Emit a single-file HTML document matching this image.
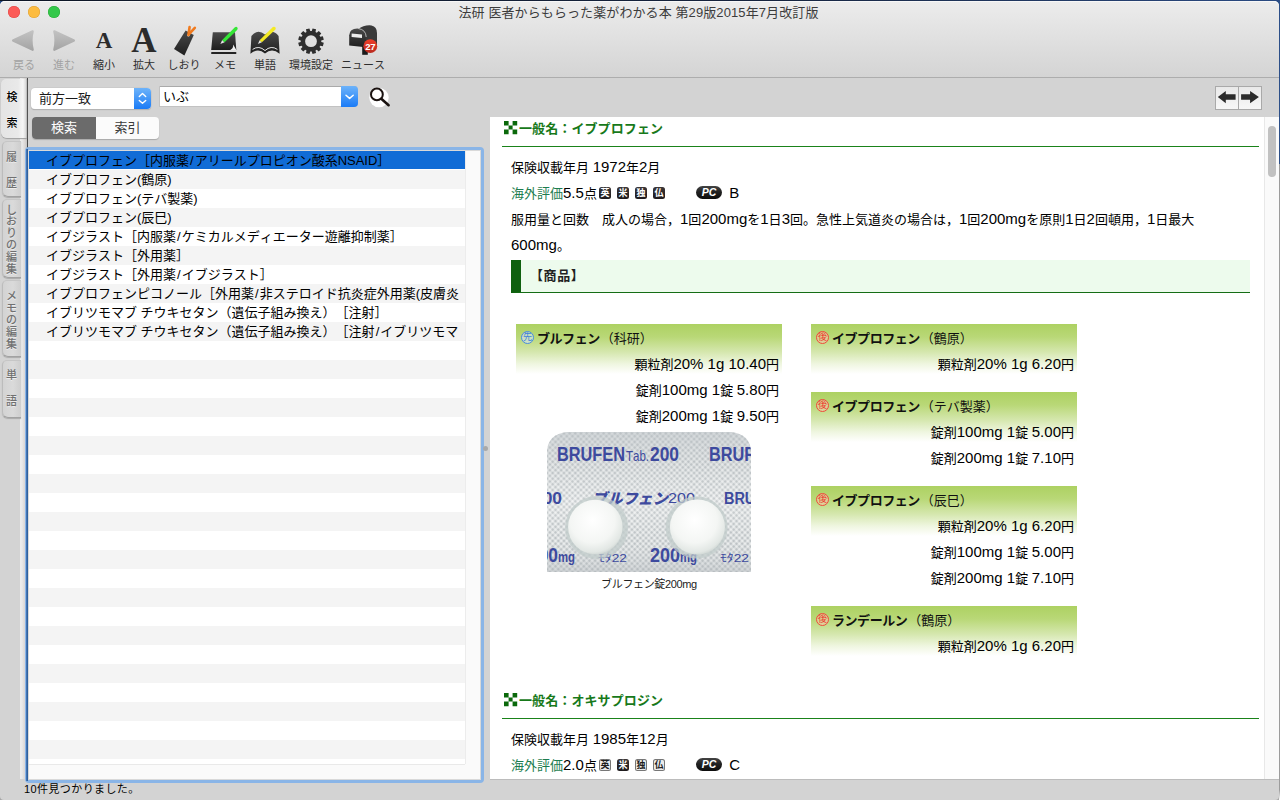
<!DOCTYPE html>
<html lang="ja">
<head>
<meta charset="utf-8">
<title>法研 医者からもらった薬がわかる本 第29版2015年7月改訂版</title>
<style>
*{box-sizing:border-box;margin:0;padding:0}
html,body{text-spacing-trim:space-all;font-kerning:none;width:1280px;height:800px;overflow:hidden;background:#d3d3d3;font-family:"Liberation Sans","Noto Sans CJK JP",sans-serif;color:#000}
.abs{position:absolute}
#win{position:absolute;left:0;top:0;width:1280px;height:800px;background:#2c4f88;overflow:hidden}
#winbg{position:absolute;left:0;top:1px;width:1279px;height:799px;background:#d3d3d3;border-radius:5px 5px 4px 4px}
#topline{position:absolute;left:0;top:0;width:1280px;height:1px;background:linear-gradient(90deg,#0d1626,#16243e 60%,#2a4a82)}
#rightline{position:absolute;left:1279px;top:0;width:1px;height:800px;background:linear-gradient(#2c4f88 0,#2c4f88 164px,#9c9c9c 164px,#9c9c9c 790px,#fff 800px)}
#toolbar{position:absolute;left:0;top:1px;width:1279px;height:77px;background:linear-gradient(#ececec,#d4d4d4);border-bottom:1px solid #adadad;border-radius:5px 5px 0 0;box-shadow:inset 0 1px 0 #f7f7f7}
.tl{position:absolute;top:5px;width:12px;height:12px;border-radius:50%}
#title{position:absolute;left:0;top:3px;width:1277px;text-align:center;font-size:13px;line-height:18px;color:#3c3c3c;letter-spacing:.1px}
.tlabel{position:absolute;top:56px;width:70px;text-align:center;font-size:11px;line-height:16px;color:#2e2e2e}
.tlabel.dis{color:#a2a2a2}
.ticon{position:absolute}
/* sidebar tabs */
#tabs{position:absolute;left:0;top:78px;width:27px;height:701px;background:linear-gradient(90deg,#d3d3d3 0,#d3d3d3 19.5px,#ececec 20.5px,#e9e9e9 22px,#dad6d4 25px,#c4c4c4 27px)}
#tabline{position:absolute;left:27px;top:78px;width:1px;height:70px;background:#4a4a4a}
.vtab{position:absolute;left:2px;width:19px;border:1px solid #bcbcbc;border-top-color:#c6c6c6;border-bottom-color:#a2a2a2;border-right:none;border-radius:5px 0 0 6px;background:linear-gradient(90deg,#d3d3d3,#dadada 55%,#cecece);color:#707070;font-weight:500;text-shadow:0 1px 0 #ededed;font-size:11px;text-align:center;box-shadow:0 1px 1px #aaa}
.vtab span{display:block;position:absolute;left:-1px;width:19px;text-align:center;line-height:12px}
#tabA{position:absolute;left:1px;top:79px;width:26px;height:59px;border-radius:5px 0 0 6px;background:linear-gradient(90deg,#e4e4e4 0,#e9e9e9 17px,#f6f6f6 22px,#d8d8d8 25px,#a8a8a8 26px);box-shadow:0 1px 1px #a0a0a0}
#tabA span{position:absolute;left:0;width:22px;text-align:center;font-size:11px;line-height:12px;color:#000;font-weight:500;text-shadow:0 0 2px #fff,0 0 1px #fff}
/* left pane */
#sel{position:absolute;left:31px;top:88px;width:120px;height:21px;border-radius:4px;background:#fff;box-shadow:0 0 0 .5px #c4c4c4,0 1px 1px rgba(0,0,0,.25);font-size:13px;line-height:21px;padding-left:8px;color:#1a1a1a}
#selb{position:absolute;right:0;top:0;width:17px;height:21px;border-radius:0 4px 4px 0;background:linear-gradient(#6db3fa,#1a7bf6)}
#inp{position:absolute;left:159px;top:86px;width:199px;height:21px;background:#fff;border:1px solid #c2c2c2;border-top-color:#aaa;font-size:13px;line-height:19px;padding-left:3px;border-radius:0 4px 4px 0}
#inpb{position:absolute;right:-1px;top:-1px;width:17px;height:21px;border-radius:0 4px 4px 0;background:linear-gradient(#6db3fa,#1a7bf6)}
#seg{position:absolute;left:32px;top:117px;width:127px;height:22px;border-radius:4px;background:#fbfbfb;box-shadow:0 1px 1px rgba(0,0,0,.2);font-size:13px;overflow:hidden}
#seg div{position:absolute;top:0;height:22px;line-height:22px;text-align:center}
#seg .on{left:0;width:64px;background:#6b6b6b;color:#fff}
#seg .off{left:64px;width:63px;color:#3a3a3a}
#ring{position:absolute;left:25px;top:147px;width:459px;height:636px;border-radius:4px;background:#8ab5e7}
#ringin{position:absolute;left:26px;top:149px;width:2px;height:632px;background:linear-gradient(90deg,#4575b3 0,#4575b3 1px,#2f62a0 1px)}
#list{position:absolute;left:28px;top:150px;width:453px;height:630px;background:#fff;overflow:hidden;border:1px solid #d9d9d9}
#rows{position:absolute;left:0;top:0;width:436px;height:613px;background:repeating-linear-gradient(#fff 0,#fff 19px,#f4f4f4 19px,#f4f4f4 38px)}
#vs{position:absolute;left:436px;top:0;width:15px;height:613px;background:#fafafa;border-left:1px solid #ececec}
#hs{position:absolute;left:0;top:613px;width:451px;height:15px;background:linear-gradient(90deg,#e9e9e9 0,#e9e9e9 436px,#fafafa 436px) top left/100% 1px no-repeat #fafafa}
.row{position:absolute;left:0;width:436px;height:19px;line-height:19px;font-size:13px;padding-left:17px;white-space:nowrap;overflow:hidden;color:#000}
.sl{margin:0 1px}
#selrow{position:absolute;left:0;top:0;width:436px;height:18px;background:#116cd6}
#split{z-index:0;position:absolute;left:483px;top:446px;width:5px;height:5px;border-radius:50%;background:#a9a9a9}
#status{position:absolute;left:24px;top:781px;font-size:11px;line-height:16px;color:#000;letter-spacing:.4px}
/* right pane */
#nav{position:absolute;left:1215px;top:86px;width:47px;height:24px;border:1px solid #a9a9a9;background:linear-gradient(#e9e9e9,#f7f7f7)}
#nav i{position:absolute;left:22px;top:0;width:1px;height:22px;background:#a9a9a9}
#doc{position:absolute;left:490px;top:117px;width:774px;height:662px;background:#fff;overflow:hidden;font-size:13px}
#sb{position:absolute;left:1264px;top:117px;width:15px;height:662px;background:#fafafa;border-left:1px solid #e8e8e8}
#thumb{position:absolute;left:1268px;top:126px;width:8px;height:51px;border-radius:4px;background:#c1c1c1}
.h1{position:absolute;left:12px;width:757px;height:30px;border-bottom:1px solid #1a831a;color:#17791a;font-weight:bold;font-size:13px;line-height:18px;padding-left:17px;padding-top:3px;letter-spacing:.1px}
.h1 svg{position:absolute;left:2px;top:4px}
.ln{position:absolute;left:21px;font-size:13px;line-height:26px;white-space:nowrap;color:#000}
.l{font-size:15px;line-height:1}
.grn{color:#1d7d4f}
.cbadge{display:inline-block;vertical-align:2.5px;width:12px;height:12px;border-radius:2.5px;background:linear-gradient(#3a3638,#1e1a1c);color:#fff;font-size:9px;line-height:12px;text-align:center;font-weight:bold;letter-spacing:0;margin-left:2px;margin-right:4px}
.cbadge.o{background:#ececec;color:#1e1e1e;box-shadow:inset 0 0 0 1px #777}
.pc{display:inline-block;vertical-align:2px;width:25.5px;height:12.5px;border-radius:6.5px;background:linear-gradient(#444 0,#222 45%,#0c0c0c);color:#fff;font-size:10.5px;line-height:12.5px;text-align:center;font-weight:bold;font-style:italic;letter-spacing:0}
#shohin{position:absolute;left:21px;top:143px;width:739px;height:33px;background:#edfbed;border-left:10px solid #0f600f;border-bottom:1px solid #156d15;font-weight:bold;font-size:13px;line-height:31px;padding-left:9px;color:#222;letter-spacing:.6px}
.pbox{position:absolute;width:266px;background:linear-gradient(#add162 0,#b9d877 13px,#d5e7ae 28px,#eff6e0 40px,#fff 50px)}
.pbox .nm{position:absolute;left:21px;top:5px;font-size:13px;line-height:20px;white-space:nowrap;color:#111}
.pbox .nm b{font-weight:bold;letter-spacing:-.45px;margin-right:1px}
.pbox .pr{position:absolute;right:3px;font-size:13px;line-height:26px;white-space:nowrap}
.mk{position:absolute;left:5px;top:7px;width:13px;height:13px;border-radius:50%;font-size:9px;line-height:11px;text-align:center}
.mk.s{border:1px solid #4a8be0;color:#3f7fdc;background:rgba(215,232,250,.55)}
.mk.k{border:1px solid #f04a3c;color:#ee3a30;background:rgba(250,200,170,.5)}
</style>
</head>
<body>
<div id="win">
<div class="abs" style="left:0;top:780px;width:1280px;height:20px;background:#a6a6a6"></div>
<div id="winbg"></div>
<div id="toolbar">
  <div class="tl" style="left:8px;background:#fc5b57;box-shadow:inset 0 0 0 .5px #df4744"></div>
  <div class="tl" style="left:28px;background:#fdbc40;box-shadow:inset 0 0 0 .5px #de9f34"></div>
  <div class="tl" style="left:48px;background:#34c84a;box-shadow:inset 0 0 0 .5px #27aa35"></div>
  <div id="title">法研 医者からもらった薬がわかる本 第29版2015年7月改訂版</div>
  <div class="tlabel dis" style="left:-11px">戻る</div>
  <div class="tlabel dis" style="left:29px">進む</div>
  <div class="tlabel" style="left:69px">縮小</div>
  <div class="tlabel" style="left:109px">拡大</div>
  <div class="tlabel" style="left:149px">しおり</div>
  <div class="tlabel" style="left:190px">メモ</div>
  <div class="tlabel" style="left:230px">単語</div>
  <div class="tlabel" style="left:276px">環境設定</div>
  <div class="tlabel" style="left:328px">ニュース</div>
</div>
<svg id="tbicons" class="abs" style="left:0;top:0" width="400" height="78" viewBox="0 0 400 78">
  <defs>
    <linearGradient id="gtri" x1="0" y1="0" x2="0" y2="1"><stop offset="0" stop-color="#c3c3c3"/><stop offset="1" stop-color="#a3a3a3"/></linearGradient>
    <linearGradient id="gblk" x1="0" y1="0" x2="0" y2="1"><stop offset="0" stop-color="#4a4a4a"/><stop offset="1" stop-color="#1e1e1e"/></linearGradient>
    <linearGradient id="gred" x1="0" y1="0" x2="0" y2="1"><stop offset="0" stop-color="#f0402a"/><stop offset="1" stop-color="#b82a1e"/></linearGradient>
  </defs>
  <path d="M12.4,39.6 L32.2,30.3 Q33.8,29.8 33.8,31.6 Q31.4,40.5 33.8,49.6 Q33.8,51.4 32.2,50.8 L12.4,41.6 Q11.4,40.6 12.4,39.6Z" fill="url(#gtri)"/>
  <path d="M74.6,39.6 L54.8,30.3 Q53.2,29.8 53.2,31.6 Q55.6,40.5 53.2,49.6 Q53.2,51.4 54.8,50.8 L74.6,41.6 Q75.6,40.6 74.6,39.6Z" fill="url(#gtri)"/>
  <text x="104" y="48" text-anchor="middle" font-family="'Liberation Serif',serif" font-weight="bold" font-size="23" fill="#2c2c2c">A</text>
  <text x="144" y="52" text-anchor="middle" font-family="'Liberation Serif',serif" font-weight="bold" font-size="35" fill="#2c2c2c">A</text>
  <!-- bookmark -->
  <path d="M185.6,30.6 L193.8,35 L184.4,55.6 L174,49Z" fill="url(#gblk)"/>
  <circle cx="188.4" cy="35.2" r="1.2" fill="#e8e8e8"/>
  <path d="M188.4,35 L189.6,27 M188.6,34.6 L194.8,27.8" stroke="#f07a1e" stroke-width="2.6" stroke-linecap="round" fill="none"/>
  <!-- memo -->
  <path d="M212.8,32.2 L235,32.2 L236.3,50 L211.2,50Z" fill="url(#gblk)"/>
  <path d="M236.3,50 L230.2,50 Q233.5,48.5 233.2,44.5Z" fill="#f0f0f0"/>
  <rect x="211.2" y="51.9" width="25.1" height="2.2" rx=".6" fill="#242424"/>
  <path d="M220.4,43.9 L222.2,40 L224.6,42.2Z" fill="#e6e6e6"/>
  <path d="M222.2,40 L234.9,27.2 Q236.5,26.2 237.4,27.6 Q238.2,28.8 237.1,29.9 L224.6,42.2Z" fill="#35e637"/>
  <!-- word book -->
  <path d="M251.4,36 Q257.5,28.5 265,34.5 Q272.5,28.5 278.6,36 L279.6,53.8 Q272,47.5 265,53.6 Q258,47.5 250.4,53.8Z" fill="url(#gblk)"/>
  <path d="M252.6,49.4 Q259,45 265,50.6 Q271,45 277.4,49.4" stroke="#e4e4e4" stroke-width="1" fill="none"/>
  <path d="M257.9,43.9 L259.6,40.2 L261.9,42.3Z" fill="#e6e6e6"/>
  <path d="M259.6,40.2 L272.9,27.1 Q274.4,26.2 275.4,27.5 Q276.2,28.7 275.2,29.8 L261.9,42.3Z" fill="#f4ea24"/>
  <!-- gear -->
  <path fill-rule="evenodd" fill="#2e2e2e" d="M321.27,41.94 L323.80,42.77 L322.87,46.24 L320.27,45.70 L319.53,46.98 L321.31,48.96 L318.76,51.51 L316.78,49.73 L315.50,50.47 L316.04,53.07 L312.57,54.00 L311.74,51.47 L310.26,51.47 L309.43,54.00 L305.96,53.07 L306.50,50.47 L305.22,49.73 L303.24,51.51 L300.69,48.96 L302.47,46.98 L301.73,45.70 L299.13,46.24 L298.20,42.77 L300.73,41.94 L300.73,40.46 L298.20,39.63 L299.13,36.16 L301.73,36.70 L302.47,35.42 L300.69,33.44 L303.24,30.89 L305.22,32.67 L306.50,31.93 L305.96,29.33 L309.43,28.40 L310.26,30.93 L311.74,30.93 L312.57,28.40 L316.04,29.33 L315.50,31.93 L316.78,32.67 L318.76,30.89 L321.31,33.44 L319.53,35.42 L320.27,36.70 L322.87,36.16 L323.80,39.63 L321.27,40.46Z M305.10,41.20 a5.9,5.9 0 1,0 11.8,0 a5.9,5.9 0 1,0 -11.8,0Z"/>
  <!-- mailbox -->
  <path d="M358,29.5 Q364,24.6 371.5,25.4 Q377,26.6 377,33 L377,46 L366,47.5Z" fill="#3a3a3a"/>
  <path d="M349.2,45.4 L349.2,35.2 Q349.6,28.6 357.4,28.5 Q365.4,29 365.8,36.4 L365.8,47.2Z" fill="url(#gblk)"/>
  <path d="M358.5,28.6 Q365.8,29.6 366.2,37" stroke="#cfcfcf" stroke-width=".8" fill="none"/>
  <path d="M351.6,33.6 L362,34.6 L362,38 L351.6,37Z" fill="#ededed"/>
  <rect x="362.2" y="46" width="5.6" height="8.8" fill="#1c1c1c"/>
  <circle cx="370.3" cy="46.2" r="6.9" fill="url(#gred)"/>
  <text x="370.3" y="49.6" text-anchor="middle" font-family="'Liberation Sans',sans-serif" font-weight="bold" font-size="9.5" fill="#fff" letter-spacing="-.3">27</text>
</svg>
<div id="topline"></div>
<div id="rightline"></div>

<div id="tabs"></div>
<div id="tabline"></div>
<div id="tabA"><span style="top:12px">検</span><span style="top:38px">索</span></div>
<div class="vtab" style="top:141px;height:56px"><span style="top:9px">履</span><span style="top:35px">歴</span></div>
<div class="vtab" style="top:199px;height:79px"><span style="top:3.5px">し</span><span style="top:15px">お</span><span style="top:27px">り</span><span style="top:39px">の</span><span style="top:51px">編</span><span style="top:62.5px">集</span></div>
<div class="vtab" style="top:280px;height:77px"><span style="top:9px">メ</span><span style="top:21px">モ</span><span style="top:33px">の</span><span style="top:45px">編</span><span style="top:56.5px">集</span></div>
<div class="vtab" style="top:360px;height:58px"><span style="top:8px">単</span><span style="top:34px">語</span></div>

<div id="sel">前方一致<div id="selb"><svg width="17" height="21" viewBox="0 0 17 21" style="display:block"><path d="M5.3,8.5 L8.5,5.6 L11.7,8.5 M5.3,12.4 L8.5,15.3 L11.7,12.4" stroke="#fff" stroke-width="1.4" fill="none" stroke-linecap="round" stroke-linejoin="round"/></svg></div></div>
<div id="inp">いぶ<div id="inpb"><svg width="17" height="21" viewBox="0 0 17 21" style="display:block"><path d="M5,9.3 L8.6,12.4 L12.2,9.3" stroke="#fff" stroke-width="1.5" fill="none" stroke-linecap="round" stroke-linejoin="round"/></svg></div></div>
<svg class="abs" style="left:366px;top:84px" width="28" height="26" viewBox="366 84 28 26"><circle cx="379" cy="97.6" r="9.7" fill="#fff"/><circle cx="376.9" cy="94.4" r="5.9" fill="none" stroke="#1a1210" stroke-width="2"/><path d="M381.3,98.8 L388.6,105.2" stroke="#1a1210" stroke-width="2.6" stroke-linecap="round"/></svg>
<div id="seg"><div class="on">検索</div><div class="off">索引</div></div>

<div id="ring"></div><div id="ringin"></div>
<div id="list">
  <div id="rows">
    <div id="selrow"></div>
    <div class="row" style="top:0">イブプロフェン［内服薬<span class="sl">/</span>アリールプロピオン酸系NSAID］</div>
    <div class="row" style="top:19px">イブプロフェン(鶴原)</div>
    <div class="row" style="top:38px">イブプロフェン(テバ製薬)</div>
    <div class="row" style="top:57px">イブプロフェン(辰巳)</div>
    <div class="row" style="top:76px">イブジラスト［内服薬<span class="sl">/</span>ケミカルメディエーター遊離抑制薬］</div>
    <div class="row" style="top:95px">イブジラスト［外用薬］</div>
    <div class="row" style="top:114px">イブジラスト［外用薬<span class="sl">/</span>イブジラスト］</div>
    <div class="row" style="top:133px">イブプロフェンピコノール［外用薬<span class="sl">/</span>非ステロイド抗炎症外用薬(皮膚炎</div>
    <div class="row" style="top:152px">イブリツモマブ チウキセタン（遺伝子組み換え）［注射］</div>
    <div class="row" style="top:171px">イブリツモマブ チウキセタン（遺伝子組み換え）［注射<span class="sl">/</span>イブリツモマ</div>
  </div>
  <div id="vs"></div>
  <div id="hs"></div>
</div>
<div id="split"></div>
<div id="status">10件見つかりました。</div>

<div id="nav"><i></i><svg class="abs" style="left:-1px;top:-1px" width="47" height="24" viewBox="1215 86 47 24"><path d="M1217.8,97 L1225.8,91 L1225.8,94.2 L1235.6,94.2 L1235.6,99.7 L1225.8,99.7 L1225.8,103.2Z M1258.9,97 L1250.1,91 L1250.1,94.2 L1241.1,94.2 L1241.1,99.7 L1250.1,99.7 L1250.1,103.2Z" fill="#2b2b2b"/></svg></div>
<div id="doc">
  <div class="h1" style="top:0"><svg width="14" height="14" viewBox="0 0 14 14"><path d="M0,0h4.6v4.6h-4.6z M8.6,0h4.6v4.6h-4.6z M4.6,4.6h4v4h-4z M0,8.6h4.6v4.6h-4.6z M8.6,8.6h4.6v4.6h-4.6z" fill="#0b690b"/></svg>一般名：イブプロフェン</div>
  <div class="ln" style="top:38px">保険収載年月 <span class="l">1972</span>年<span class="l">2</span>月</div>
  <div class="ln" style="top:64px"><span class="grn">海外評価</span><span class="l">5.5</span>点<span class="cbadge">英</span><span class="cbadge">米</span><span class="cbadge">独</span><span class="cbadge">仏</span><span style="display:inline-block;width:27.5px"></span><span class="pc">PC</span>&nbsp; <span class="l">B</span></div>
  <div class="ln" style="top:90px">服用量と回数　成人の場合，<span class="l">1</span>回<span class="l">200mg</span>を<span class="l">1</span>日<span class="l">3</span>回。急性上気道炎の場合は，<span class="l">1</span>回<span class="l">200mg</span>を原則<span class="l">1</span>日<span class="l">2</span>回頓用，<span class="l">1</span>日最大</div>
  <div class="ln" style="top:116px"><span class="l">600mg</span>。</div>
  <div id="shohin">【商品】</div>

  <div class="pbox" style="left:26px;top:207px;height:110px"><span class="mk s">先</span><div class="nm"><b>ブルフェン</b>（科研）</div>
    <div class="pr" style="top:28px">顆粒剤<span class="l">20% 1g 10.40</span>円</div>
    <div class="pr" style="top:54px">錠剤<span class="l">100mg 1</span>錠 <span class="l">5.80</span>円</div>
    <div class="pr" style="top:80px">錠剤<span class="l">200mg 1</span>錠 <span class="l">9.50</span>円</div>
  </div>

  <svg class="abs" style="left:57px;top:315px" width="204" height="140" viewBox="0 0 204 140">
    <defs>
      <pattern id="hatch" width="4" height="4" patternUnits="userSpaceOnUse" patternTransform="rotate(45)"><rect width="4" height="4" fill="#d6dadb"/><rect width="2" height="2" fill="#b4babd"/><rect x="2" y="2" width="2" height="2" fill="#eceeee"/></pattern>
      <clipPath id="pclip"><path d="M0,140 L0,18 Q2,2 20,0 L184,0 Q202,2 204,18 L204,140Z"/></clipPath>
      <radialGradient id="tabg" cx=".45" cy=".38" r=".66"><stop offset="0" stop-color="#ffffff"/><stop offset=".62" stop-color="#f4f6f4"/><stop offset=".88" stop-color="#e2e7e4"/><stop offset="1" stop-color="#c9d1ce"/></radialGradient>
      <linearGradient id="pshade" x1="0" y1="0" x2="0" y2="1"><stop offset="0" stop-color="#c2c8cc" stop-opacity=".6"/><stop offset=".22" stop-color="#d4d8da" stop-opacity=".3"/><stop offset=".5" stop-color="#ffffff" stop-opacity=".3"/><stop offset=".8" stop-color="#e4e7e8" stop-opacity=".2"/><stop offset="1" stop-color="#b9bec2" stop-opacity=".5"/></linearGradient>
    </defs>
    <g clip-path="url(#pclip)">
      <rect width="204" height="140" fill="url(#hatch)"/>
      <rect width="204" height="140" fill="url(#pshade)"/>
      <g fill="#3d4a9e" font-family="'Liberation Sans',sans-serif" font-weight="bold">
        <text x="10" y="29" font-size="21" textLength="68" lengthAdjust="spacingAndGlyphs">BRUFEN</text>
        <text x="79" y="29" font-size="15" font-weight="normal" textLength="23" lengthAdjust="spacingAndGlyphs">Tab.</text>
        <text x="103" y="29" font-size="21" textLength="29" lengthAdjust="spacingAndGlyphs">200</text>
        <text x="162" y="29" font-size="21" textLength="68" lengthAdjust="spacingAndGlyphs">BRUFEN</text>
        <text x="-14" y="72" font-size="16" textLength="29" lengthAdjust="spacingAndGlyphs">200</text>
        <text x="45" y="72" font-size="15" font-style="italic" font-family="'Liberation Sans','Noto Sans CJK JP',sans-serif" font-weight="900" textLength="76" lengthAdjust="spacingAndGlyphs">ブルフェン</text>
        <text x="121" y="71" font-size="15" font-weight="normal" textLength="27" lengthAdjust="spacingAndGlyphs">200</text>
        <text x="177" y="72" font-size="16" textLength="60" lengthAdjust="spacingAndGlyphs">BRUFEN</text>
        <text x="-18" y="130" font-size="19.5" textLength="29" lengthAdjust="spacingAndGlyphs">200</text><text x="11" y="130" font-size="14" textLength="17" lengthAdjust="spacingAndGlyphs">mg</text>
        <text x="51" y="130" font-size="11" font-weight="normal" font-family="'Liberation Sans','Noto Sans CJK JP',sans-serif" textLength="29" lengthAdjust="spacingAndGlyphs">ﾓﾀ22</text>
        <text x="103" y="130" font-size="19.5" textLength="30" lengthAdjust="spacingAndGlyphs">200</text><text x="133" y="130" font-size="14" textLength="17" lengthAdjust="spacingAndGlyphs">mg</text>
        <text x="173" y="130" font-size="11" font-weight="normal" font-family="'Liberation Sans','Noto Sans CJK JP',sans-serif" textLength="29" lengthAdjust="spacingAndGlyphs">ﾓﾀ22</text>
      </g>
      <circle cx="49.6" cy="95.5" r="31.5" fill="#c2cccb" opacity=".75"/>
      <circle cx="149.6" cy="95.5" r="31" fill="#c2cccb" opacity=".75"/>
      <circle cx="48.3" cy="95" r="27.2" fill="url(#tabg)"/>
      <circle cx="150.4" cy="95" r="27.5" fill="url(#tabg)"/>
    </g>
  </svg>
  <div class="abs" style="left:57px;top:459px;width:204px;text-align:center;font-size:11px;line-height:16px;color:#222;letter-spacing:-.35px">ブルフェン錠200mg</div>
  <div class="pbox" style="left:321px;top:207px;height:60px"><span class="mk k">後</span><div class="nm"><b>イブプロフェン</b>（鶴原）</div>
    <div class="pr" style="top:28px">顆粒剤<span class="l">20% 1g 6.20</span>円</div>
  </div>
  <div class="pbox" style="left:321px;top:275px;height:86px"><span class="mk k">後</span><div class="nm"><b>イブプロフェン</b>（テバ製薬）</div>
    <div class="pr" style="top:28px">錠剤<span class="l">100mg 1</span>錠 <span class="l">5.00</span>円</div>
    <div class="pr" style="top:54px">錠剤<span class="l">200mg 1</span>錠 <span class="l">7.10</span>円</div>
  </div>
  <div class="pbox" style="left:321px;top:369px;height:112px"><span class="mk k">後</span><div class="nm"><b>イブプロフェン</b>（辰巳）</div>
    <div class="pr" style="top:28px">顆粒剤<span class="l">20% 1g 6.20</span>円</div>
    <div class="pr" style="top:54px">錠剤<span class="l">100mg 1</span>錠 <span class="l">5.00</span>円</div>
    <div class="pr" style="top:80px">錠剤<span class="l">200mg 1</span>錠 <span class="l">7.10</span>円</div>
  </div>
  <div class="pbox" style="left:321px;top:489px;height:60px"><span class="mk k">後</span><div class="nm"><b>ランデールン</b>（鶴原）</div>
    <div class="pr" style="top:28px">顆粒剤<span class="l">20% 1g 6.20</span>円</div>
  </div>

  <div class="h1" style="top:572px"><svg width="14" height="14" viewBox="0 0 14 14"><path d="M0,0h4.6v4.6h-4.6z M8.6,0h4.6v4.6h-4.6z M4.6,4.6h4v4h-4z M0,8.6h4.6v4.6h-4.6z M8.6,8.6h4.6v4.6h-4.6z" fill="#0b690b"/></svg>一般名：オキサプロジン</div>
  <div class="ln" style="top:610px">保険収載年月 <span class="l">1985</span>年<span class="l">12</span>月</div>
  <div class="ln" style="top:636px"><span class="grn">海外評価</span><span class="l">2.0</span>点<span class="cbadge o">英</span><span class="cbadge">米</span><span class="cbadge o">独</span><span class="cbadge o">仏</span><span style="display:inline-block;width:27.5px"></span><span class="pc">PC</span>&nbsp; <span class="l">C</span></div>
</div>
<div class="abs" style="left:490px;top:779px;width:789px;height:1px;background:#bcbcbc"></div>
<div id="sb"></div><div id="thumb"></div>
</div>
</body>
</html>
